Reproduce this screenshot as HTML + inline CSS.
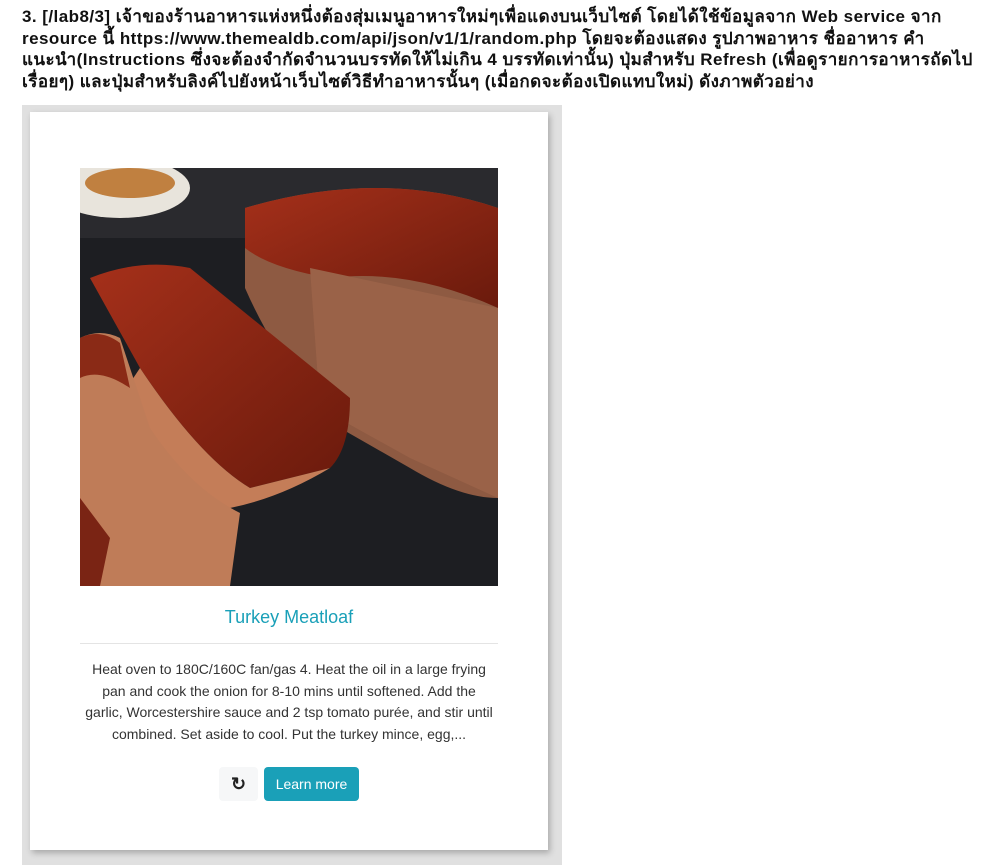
<!DOCTYPE html>
<html><head><meta charset="utf-8"><style>
body{margin:0;background:#fff;width:997px;height:865px;overflow:hidden;font-family:"Liberation Sans","Noto Sans CJK SC",sans-serif}
.q{position:absolute;left:22px;top:6px;width:975px;font-size:17px;font-weight:bold;line-height:21.5px;color:#111;letter-spacing:0.45px;white-space:nowrap}
.outer{position:absolute;left:22px;top:105px;width:540px;height:760px;background:#e0e0e0}
.card{position:absolute;left:30px;top:112px;width:518px;height:738px;background:#fff;box-shadow:2px 3px 6px rgba(0,0,0,.25)}
.img{position:absolute;left:80px;top:168px;width:418px;height:418px}
.title{position:absolute;left:80px;width:418px;top:607px;text-align:center;color:#1aa0b8;font-size:18px}
.hr{position:absolute;left:80px;width:418px;top:643px;height:1px;background:#e4e4e4}
.txt{position:absolute;left:60px;width:458px;top:659px;text-align:center;color:#333;font-size:14px;line-height:21.5px;white-space:nowrap}
.b1{position:absolute;left:219px;top:767px;width:39px;height:34px;background:#f6f7f8;border-radius:4px;font-size:18px;text-align:center;line-height:34px;color:#222;font-weight:bold}
.b2{position:absolute;left:264px;top:767px;width:95px;height:34px;background:#1aa0b8;border-radius:4px;color:#fff;font-size:14px;text-align:center;line-height:34px}
</style></head><body>
<div class="q">3. [/lab8/3] เจ้าของร้านอาหารแห่งหนึ่งต้องสุ่มเมนูอาหารใหม่ๆเพื่อแดงบนเว็บไซต์ โดยได้ใช้ข้อมูลจาก Web service จาก<br>resource นี้ https://www.themealdb.com/api/json/v1/1/random.php โดยจะต้องแสดง รูปภาพอาหาร ชื่ออาหาร คำ<br>แนะนำ(Instructions ซึ่งจะต้องจำกัดจำนวนบรรทัดให้ไม่เกิน 4 บรรทัดเท่านั้น) ปุ่มสำหรับ Refresh (เพื่อดูรายการอาหารถัดไป<br>เรื่อยๆ) และปุ่มสำหรับลิงค์ไปยังหน้าเว็บไซต์วิธีทำอาหารนั้นๆ (เมื่อกดจะต้องเปิดแทบใหม่) ดังภาพตัวอย่าง</div>
<div class="outer"></div>
<div class="card"></div>
<svg class="img" viewBox="0 0 418 418">
<defs>
<linearGradient id="g1" x1="0" y1="0" x2="1" y2="1"><stop offset="0" stop-color="#a5301a"/><stop offset="1" stop-color="#6a1a0c"/></linearGradient>
</defs>
<rect width="418" height="418" fill="#1d1e22"/>
<rect x="0" y="0" width="418" height="70" fill="#2a2a2e"/>
<ellipse cx="40" cy="20" rx="70" ry="30" fill="#e8e4dc"/>
<ellipse cx="50" cy="15" rx="45" ry="15" fill="#c08040"/>
<path d="M165,40 Q300,0 418,40 L418,330 Q380,330 330,300 L260,260 Q200,200 165,120 Z" fill="#8e5a42"/>
<path d="M165,40 Q300,0 418,40 L418,140 Q330,100 250,110 Q190,100 165,80 Z" fill="url(#g1)"/>
<path d="M230,100 L418,140 L418,330 L330,290 L240,240 Z" fill="#9a6248"/>
<path d="M10,110 Q60,90 110,100 L270,230 Q270,280 250,300 L170,320 Q120,290 60,200 Z" fill="url(#g1)"/>
<path d="M60,200 Q120,290 170,320 L250,300 Q200,330 150,340 Q80,300 40,230 Z" fill="#c47d58"/>
<path d="M0,170 Q20,160 40,170 L70,260 Q110,320 160,345 L150,418 L0,418 Z" fill="#bf7c58"/>
<path d="M0,170 Q20,160 40,175 L50,220 Q20,200 0,210 Z" fill="#8a2a16"/>
<path d="M0,330 L30,370 L20,418 L0,418 Z" fill="#7a2414"/>
</svg>
<div class="title">Turkey Meatloaf</div>
<div class="hr"></div>
<div class="txt">Heat oven to 180C/160C fan/gas 4. Heat the oil in a large frying<br>pan and cook the onion for 8-10 mins until softened. Add the<br>garlic, Worcestershire sauce and 2 tsp tomato purée, and stir until<br>combined. Set aside to cool. Put the turkey mince, egg,...</div>
<div class="b1">↻</div>
<div class="b2">Learn more</div>
</body></html>
